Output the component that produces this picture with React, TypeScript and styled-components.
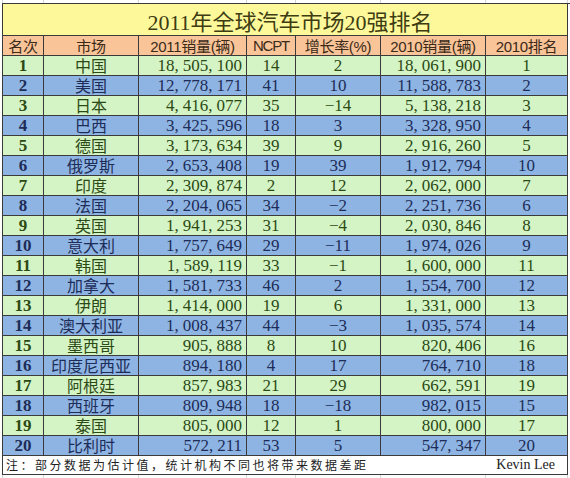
import React from "react";
import styled, { createGlobalStyle } from "styled-components";

const GlobalStyle = createGlobalStyle`
  html, body { margin: 0; padding: 0; background: #ffffff; }
  body { font-family: "Liberation Serif", "Noto Sans CJK SC", serif; }
`;

const COLS = "41px 95px 108px 49px 85px 105px 82px";

const Page = styled.div`
  width: 570px;
  height: 478px;
  overflow: hidden;
  padding-left: 2px;
  box-sizing: border-box;
  display: flex;
  flex-direction: column;
`;

const GridStrip = styled.div<{ $h: number }>`
  display: grid;
  grid-template-columns: ${COLS};
  height: ${(p) => p.$h}px;
  border-left: 1px solid #d4d4d4;
`;

const GridGap = styled.div`
  border-right: 1px solid #d4d4d4;
`;

const Table = styled.div`
  display: grid;
  grid-template-columns: ${COLS};
  border-left: 1px solid #3a3a3a;
  border-top: 1px solid #3a3a3a;
`;

const Title = styled.div`
  grid-column: 1 / -1;
  height: 32px;
  box-sizing: border-box;
  background: #fdf99b;
  border-right: 1px solid #3a3a3a;
  border-bottom: 1px solid #3a3a3a;
  display: flex;
  align-items: center;
  justify-content: center;
  font-family: "Liberation Serif", "Noto Sans CJK SC", serif;
  font-size: 22px;
  letter-spacing: 0;
  color: #3d3c12;
  padding: 1px 0 0 10px;
`;

const Head = styled.div<{ $tight?: boolean }>`
  height: 20px;
  box-sizing: border-box;
  background: #f9c497;
  border-right: 1px solid #3a3a3a;
  border-bottom: 1px solid #3a3a3a;
  display: flex;
  align-items: center;
  justify-content: center;
  font-family: "Liberation Sans", "Noto Sans CJK SC", sans-serif;
  font-size: 15px;
  color: #3a2a18;
  white-space: nowrap;
  letter-spacing: ${(p) => (p.$tight ? "-1.2px" : "-0.3px")};
`;

const Cell = styled.div<{ $blue: boolean; $align?: "left" | "center" | "right"; $cjk?: boolean; $bold?: boolean }>`
  height: 20px;
  box-sizing: border-box;
  background: ${(p) => (p.$blue ? "#8eb4e3" : "#d4f4c6")};
  color: ${(p) => (p.$blue ? "#1d2d58" : "#2c4a14")};
  border-right: 1px solid #3a3a3a;
  border-bottom: 1px solid #3a3a3a;
  display: flex;
  align-items: center;
  justify-content: ${(p) =>
    p.$align === "right" ? "flex-end" : p.$align === "left" ? "flex-start" : "center"};
  padding: 0 4px;
  white-space: nowrap;
  font-family: ${(p) =>
    p.$cjk
      ? `"Noto Sans CJK SC", sans-serif`
      : `"Liberation Serif", "Noto Sans CJK SC", serif`};
  font-size: ${(p) => (p.$cjk ? "16px" : "17px")};
  font-weight: ${(p) => (p.$bold ? 700 : 400)};
  line-height: 1;
`;

const Comma = styled.span`
  margin-right: 4px;
`;

const Note = styled.div`
  grid-column: 1 / -1;
  height: 19px;
  box-sizing: border-box;
  background: #ffffff;
  border-right: 1px solid #3a3a3a;
  border-bottom: 1px solid #3a3a3a;
  display: flex;
  align-items: center;
  justify-content: space-between;
  padding: 0 12px 0 3px;
`;

const NoteText = styled.span`
  font-family: "Noto Sans CJK SC", sans-serif;
  font-size: 12px;
  letter-spacing: 2.5px;
  color: #222222;
`;

const Author = styled.span`
  font-family: "Liberation Serif", serif;
  font-size: 14px;
  color: #222222;
`;

type Row = [string, string, string, string, string, string];

const rows: Row[] = [
  ["中国", "18,505,100", "14", "2", "18,061,900", "1"],
  ["美国", "12,778,171", "41", "10", "11,588,783", "2"],
  ["日本", "4,416,077", "35", "−14", "5,138,218", "3"],
  ["巴西", "3,425,596", "18", "3", "3,328,950", "4"],
  ["德国", "3,173,634", "39", "9", "2,916,260", "5"],
  ["俄罗斯", "2,653,408", "19", "39", "1,912,794", "10"],
  ["印度", "2,309,874", "2", "12", "2,062,000", "7"],
  ["法国", "2,204,065", "34", "−2", "2,251,736", "6"],
  ["英国", "1,941,253", "31", "−4", "2,030,846", "8"],
  ["意大利", "1,757,649", "29", "−11", "1,974,026", "9"],
  ["韩国", "1,589,119", "33", "−1", "1,600,000", "11"],
  ["加拿大", "1,581,733", "46", "2", "1,554,700", "12"],
  ["伊朗", "1,414,000", "19", "6", "1,331,000", "13"],
  ["澳大利亚", "1,008,437", "44", "−3", "1,035,574", "14"],
  ["墨西哥", "905,888", "8", "10", "820,406", "16"],
  ["印度尼西亚", "894,180", "4", "17", "764,710", "18"],
  ["阿根廷", "857,983", "21", "29", "662,591", "19"],
  ["西班牙", "809,948", "18", "−18", "982,015", "15"],
  ["泰国", "805,000", "12", "1", "800,000", "17"],
  ["比利时", "572,211", "53", "5", "547,347", "20"],
];

const Num: React.FC<{ value: string }> = ({ value }) => {
  const parts = value.split(",");
  return (
    <>
      {parts.map((p, i) => (
        <React.Fragment key={i}>
          {p}
          {i < parts.length - 1 && <Comma>,</Comma>}
        </React.Fragment>
      ))}
    </>
  );
};

const headers = ["名次", "市场", "2011销量(辆)", "NCPT", "增长率(%)", "2010销量(辆)", "2010排名"];

export default function App() {
  const gaps = Array.from({ length: 7 });
  return (
    <>
      <GlobalStyle />
      <Page>
        <GridStrip $h={3}>
          {gaps.map((_, i) => (
            <GridGap key={i} />
          ))}
        </GridStrip>
        <Table>
          <Title>2011年全球汽车市场20强排名</Title>
          {headers.map((h) => (
            <Head key={h} $tight={h === "NCPT"}>
              {h}
            </Head>
          ))}
          {rows.map((r, i) => {
            const blue = i % 2 === 1;
            return (
              <React.Fragment key={i}>
                <Cell $blue={blue} $bold>
                  {i + 1}
                </Cell>
                <Cell $blue={blue} $cjk>
                  {r[0]}
                </Cell>
                <Cell $blue={blue} $align="right">
                  <Num value={r[1]} />
                </Cell>
                <Cell $blue={blue}>{r[2]}</Cell>
                <Cell $blue={blue}>{r[3]}</Cell>
                <Cell $blue={blue} $align="right">
                  <Num value={r[4]} />
                </Cell>
                <Cell $blue={blue}>{r[5]}</Cell>
              </React.Fragment>
            );
          })}
          <Note>
            <NoteText>注：部分数据为估计值，统计机构不同也将带来数据差距</NoteText>
            <Author>Kevin Lee</Author>
          </Note>
        </Table>
        <GridStrip $h={4}>
          {gaps.map((_, i) => (
            <GridGap key={i} />
          ))}
        </GridStrip>
      </Page>
    </>
  );
}
